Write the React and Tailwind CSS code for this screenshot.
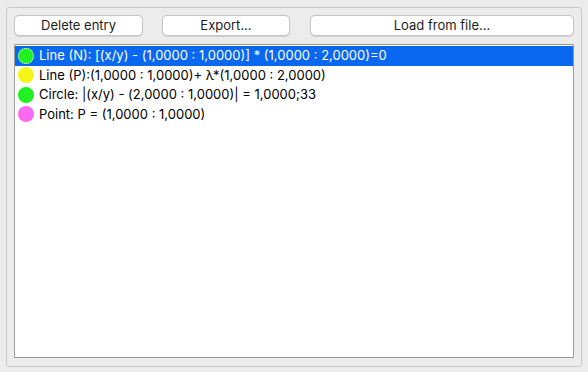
import React from 'react'

const entries = [
  { color: 'bg-[#22f022]', text: 'Line (N): [(x/y) - (1,0000 : 1,0000)] * (1,0000 : 2,0000)=0', selected: true },
  { color: 'bg-[#f5f51a]', text: 'Line (P):(1,0000 : 1,0000)+ λ*(1,0000 : 2,0000)' },
  { color: 'bg-[#22f022]', text: 'Circle: |(x/y) - (2,0000 : 1,0000)| = 1,0000;33' },
  { color: 'bg-[#fa6af0]', text: 'Point: P = (1,0000 : 1,0000)' },
]

const Button = ({ children, className }) => (
  <button
    className={`h-[21px] bg-white border border-[#c6c6c6] rounded-[5px] shadow-[0_0.5px_1px_rgba(0,0,0,0.12)] text-[13px] text-[#1d1d1d] leading-none ${className}`}
  >
    {children}
  </button>
)

const App = () => {
  return (
    <div className="w-[588px] h-[372px] bg-[#ececec] pt-[7px] px-[6px] pb-[5px] font-['Inter','Liberation_Sans',Arial,sans-serif]">
      <div className="h-[360px] border border-[#c9c9c9] rounded-[3px] px-[7px] pt-[7px] pb-[8px] flex flex-col">
        <div className="flex items-center h-[21px]">
          <Button className="w-[129px]">Delete entry</Button>
          <Button className="w-[128px] ml-[19px]">Export...</Button>
          <Button className="w-[264px] ml-[20px]">Load from file...</Button>
        </div>
        <div className="mt-[8px] flex-1 bg-white border border-[#9b9b9b] pt-px">
          {entries.map((e, i) => (
            <div
              key={i}
              className={`h-[19.5px] flex items-center pl-[3px] text-[13px] ${e.selected ? 'bg-[#0a68f0] text-white' : 'text-black'}`}
            >
              <span
                className={`w-[16px] h-[16px] rounded-full shrink-0 ${e.color} ${e.selected ? 'outline-1 outline-dotted outline-white -outline-offset-1' : ''}`}
              />
              <span className="ml-[5px] whitespace-nowrap">{e.text}</span>
            </div>
          ))}
        </div>
      </div>
    </div>
  )
}

export default App
